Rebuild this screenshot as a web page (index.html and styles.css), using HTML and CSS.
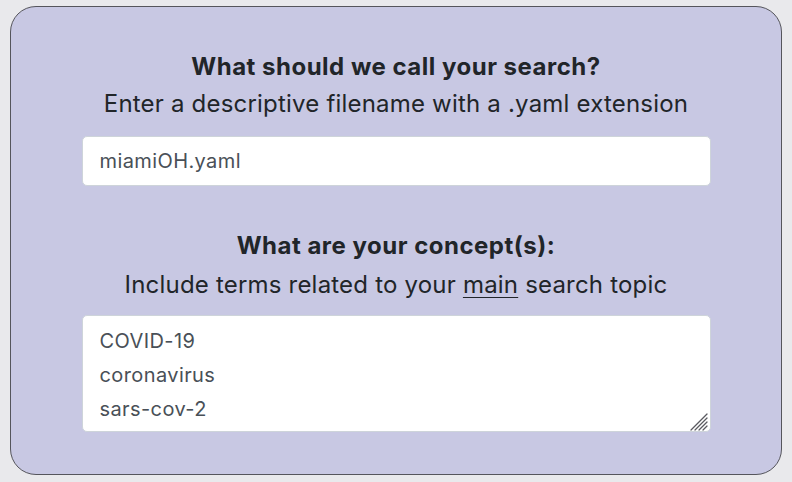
FILE: index.html
```html
<!DOCTYPE html>
<html>
<head>
<meta charset="utf-8">
<link rel="stylesheet" href="styles.css">
</head>
<body>
<div class="card">
  <div class="group">
    <div class="title">What should we call your search?</div>
    <div class="sub">Enter a descriptive filename with a .yaml extension</div>
    <input class="field" type="text" value="miamiOH.yaml">
  </div>
  <div class="group second">
    <div class="title">What are your concept(s):</div>
    <div class="sub">Include terms related to your <u>main</u> search topic</div>
    <div class="area-wrap">
      <textarea class="field area">COVID-19
coronavirus
sars-cov-2</textarea>
      <svg class="grip" width="20" height="20" viewBox="0 0 20 20">
        <g stroke="#5a5a60" stroke-width="1.2" stroke-linecap="round">
          <line x1="2" y1="19" x2="18" y2="3"/>
          <line x1="6" y1="19" x2="18" y2="7"/>
          <line x1="10" y1="19" x2="18" y2="11"/>
          <line x1="14" y1="19" x2="18" y2="15"/>
        </g>
      </svg>
    </div>
  </div>
</div>
</body>
</html>
```
FILE: styles.css
```css
html, body {
  margin: 0;
  padding: 0;
  background: #e9e9ec;
}
body {
  padding: 6px 10px 0 10px;
  font-family: Inter, "Liberation Sans", sans-serif;
  color: #212529;
}
.card {
  box-sizing: border-box;
  width: 772px;
  height: 469px;
  background: #c8c8e3;
  border: 1px solid #55555c;
  border-radius: 26px;
  padding: 45px 71px 0 71px;
}
.group {
  display: flex;
  flex-direction: column;
  align-items: center;
}
.second {
  margin-top: 45px;
}
.title {
  font-weight: 700;
  font-size: 24px;
  line-height: 30px;
  letter-spacing: 0.5px;
}
.sub {
  font-size: 24px;
  line-height: 34px;
  margin-top: 5px;
  letter-spacing: 0.2px;
}
.second .sub {
  margin-top: 7px;
}
.sub u {
  text-decoration-thickness: 1px;
  text-underline-offset: 4px;
}
.field {
  box-sizing: border-box;
  width: 629px;
  height: 50px;
  margin-top: 15px;
  border: 1px solid #ced4da;
  border-radius: 5px;
  background: #fff;
  font-family: Inter, "Liberation Sans", sans-serif;
  font-size: 20px;
  letter-spacing: 0.4px;
  color: #495057;
  padding: 0 17px;
  outline: none;
}
.area-wrap {
  position: relative;
  margin-top: 13px;
  display: flex;
}
.area {
  margin-top: 0;
  height: 117px;
  padding: 8px 17px;
  line-height: 34px;
  resize: none;
  overflow: hidden;
}
.grip {
  position: absolute;
  right: 2px;
  bottom: 1px;
}
```
